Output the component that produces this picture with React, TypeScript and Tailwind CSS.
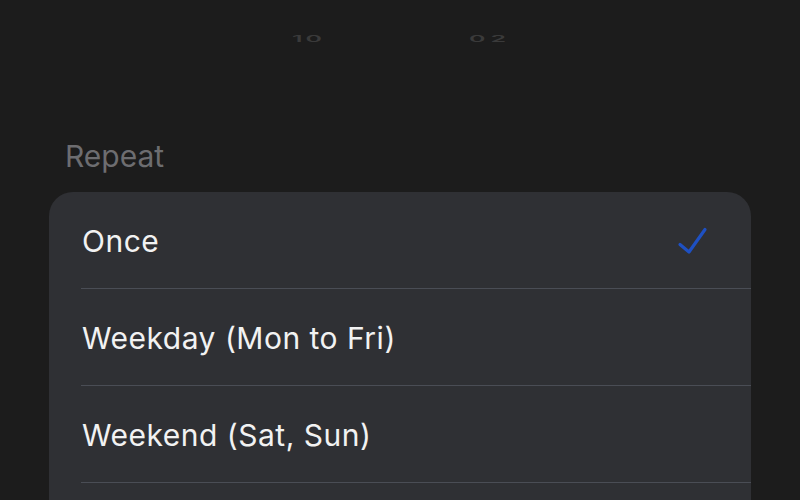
const options = [
  { label: 'Once', checked: true },
  { label: 'Weekday (Mon to Fri)', checked: false },
  { label: 'Weekend (Sat, Sun)', checked: false },
];

function Check() {
  return (
    <svg width="34" height="34" viewBox="0 0 34 34" fill="none">
      <path d="M3 19.5 L12 27 L28 4.5" stroke="#1e50c2" strokeWidth="3.2" strokeLinecap="round" strokeLinejoin="round" />
    </svg>
  );
}

export default function App() {
  return (
    <div className="w-[800px] h-[500px] overflow-hidden bg-[#1c1c1c] font-['Inter','Liberation_Sans',sans-serif]">
      <div className="flex h-[78px] items-start pt-[27px] text-[#3a3a3a]">
        <span className="ml-[292px] w-[40px] text-[25px] font-semibold leading-none tracking-[3px] scale-y-[0.33]">10</span>
        <span className="ml-[137px] w-[50px] text-[25px] font-semibold leading-none tracking-[5px] scale-y-[0.33]">02</span>
      </div>
      <div className="h-[114px] flex items-end pb-[21px] pl-[65px]">
        <span className="text-[30px] leading-none text-[#6d6d70]">Repeat</span>
      </div>
      <div className="mx-[49px] rounded-[24px] bg-[#2f3034]">
        {options.map((o) => (
          <div key={o.label}>
            <div className="flex h-[96px] items-center pt-[3px] pl-[33px] pr-[40px]">
              <span className="flex-1 text-[30px] tracking-[0.5px] text-[#f2f2f2]">{o.label}</span>
              {o.checked && <Check />}
            </div>
            <div className="ml-[32px] h-px bg-[#4a4d55]" />
          </div>
        ))}
        {/* next row sits below the fold */}
        <div className="h-[96px]" />
      </div>
    </div>
  );
}
